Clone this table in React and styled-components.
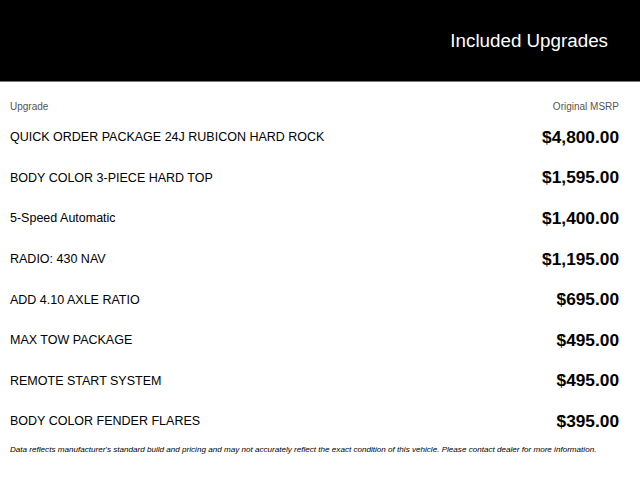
import React from 'react';
import styled, { createGlobalStyle } from 'styled-components';

const GlobalStyle = createGlobalStyle`
  body {
    margin: 0;
    background: #fff;
    font-family: "Liberation Sans", Arial, sans-serif;
  }
`;

const upgrades = [
  { name: 'QUICK ORDER PACKAGE 24J RUBICON HARD ROCK', price: '$4,800.00' },
  { name: 'BODY COLOR 3-PIECE HARD TOP', price: '$1,595.00' },
  { name: '5-Speed Automatic', price: '$1,400.00' },
  { name: 'RADIO: 430 NAV', price: '$1,195.00' },
  { name: 'ADD 4.10 AXLE RATIO', price: '$695.00' },
  { name: 'MAX TOW PACKAGE', price: '$495.00' },
  { name: 'REMOTE START SYSTEM', price: '$495.00' },
  { name: 'BODY COLOR FENDER FLARES', price: '$395.00' },
];

const App = () => {
  return (
    <Page>
      <GlobalStyle />
      <Header>
        <Title>Included Upgrades</Title>
      </Header>
      <Body>
        <Labels>
          <span>Upgrade</span>
          <span>Original MSRP</span>
        </Labels>
        {upgrades.map((u, i) => (
          <Row key={i}>
            <Name>{u.name}</Name>
            <Price>{u.price}</Price>
          </Row>
        ))}
        <Disclaimer>
          Data reflects manufacturer's standard build and pricing and may not accurately reflect the exact condition of this vehicle. Please contact dealer for more information.
        </Disclaimer>
      </Body>
    </Page>
  );
};

export default App;

const Page = styled.div`
  width: 640px;
  height: 480px;
  overflow: hidden;
`;

const Header = styled.header`
  height: 81px;
  background: #000;
  border-bottom: 1px solid #7a7a7a;
  display: flex;
  align-items: center;
  justify-content: flex-end;
  padding-right: 32px;
`;

const Title = styled.h1`
  margin: 0;
  font-size: 18.8px;
  font-weight: 400;
  color: #fff;
`;

const Body = styled.div`
  padding: 0 21px 0 10px;
`;

const Labels = styled.div`
  display: flex;
  justify-content: space-between;
  padding-top: 18px;
  height: 17px;
  line-height: 14px;
  font-size: 10px;
  color: #555;
`;

const Row = styled.div`
  display: flex;
  justify-content: space-between;
  align-items: center;
  height: 40.6px;
`;

const Name = styled.span`
  font-size: 12.5px;
  color: #000;
`;

const Price = styled.span`
  font-size: 17.3px;
  font-weight: 700;
  color: #000;
`;

const Disclaimer = styled.p`
  margin: 2px 0 0;
  font-size: 8.1px;
  line-height: 12px;
  font-style: italic;
  color: #000;
  white-space: nowrap;
`;
